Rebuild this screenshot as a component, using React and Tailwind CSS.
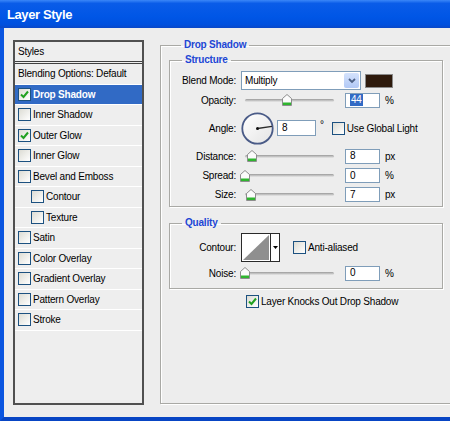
import React from "react";

const styleItems = [
  { label: "Drop Shadow", checked: true, selected: true },
  { label: "Inner Shadow" },
  { label: "Outer Glow", checked: true },
  { label: "Inner Glow" },
  { label: "Bevel and Emboss" },
  { label: "Contour", indent: true },
  { label: "Texture", indent: true },
  { label: "Satin" },
  { label: "Color Overlay" },
  { label: "Gradient Overlay" },
  { label: "Pattern Overlay" },
  { label: "Stroke" },
];

const Checkbox = ({ checked }) => (
  <span className="w-[13px] h-[13px] shrink-0 border border-[#1c5180] bg-[linear-gradient(135deg,#dcdcd4,#ffffff)] flex items-center justify-center">
    {checked && (
      <svg width="9" height="9" viewBox="0 0 9 9">
        <path d="M1 4.5 L3.5 7 L8 1.5" fill="none" stroke="#21a121" strokeWidth="2" />
      </svg>
    )}
  </span>
);

const Thumb = () => (
  <svg width="10" height="12" viewBox="0 0 10 12">
    <path d="M0.5 11.5 V4.5 L5 0.5 L9.5 4.5 V11.5 Z" fill="#fbfbfb" stroke="#8d8d8d" />
    <rect x="1" y="8.5" width="8" height="2.5" fill="#2fb52f" />
  </svg>
);

// thumb center measured from the slider's left edge
const Slider = ({ at }) => (
  <div className="relative w-[97px] h-[14px] flex items-center shrink-0">
    <div className="mx-[4px] flex-1 h-[3px] rounded-full bg-[linear-gradient(#9a9a9a,#e9e9e9)]" />
    <div className="absolute top-[1px]" style={{ left: at - 5 }}>
      <Thumb />
    </div>
  </div>
);

const NumInput = ({ value, selected, w = "w-[35px] h-[15px]" }) => (
  <div className={`${w} shrink-0 border border-[#7f9db9] bg-white flex items-center pl-[4px]`}>
    {selected ? (
      <span className="bg-[#316ac5] text-white px-[1px] leading-[12px]">{value}</span>
    ) : (
      <span className="leading-[12px]">{value}</span>
    )}
  </div>
);

const Label = ({ children }) => (
  <span className="w-[66px] shrink-0 text-right">{children}</span>
);

const SliderRow = ({ label, at, value, unit, h, selected }) => (
  <div className={`flex items-center ${h}`}>
    <Label>{label}</Label>
    <div className="ml-[5px] flex items-center">
      <Slider at={at} />
      <div className="ml-[7px]">
        <NumInput value={value} selected={selected} />
      </div>
      <span className="ml-[5px]">{unit}</span>
    </div>
  </div>
);

const Dial = () => (
  <svg width="33" height="33" viewBox="0 0 33 33">
    <defs>
      <linearGradient id="dialFill" x1="0" y1="0" x2="1" y2="1">
        <stop offset="0" stopColor="#ffffff" />
        <stop offset="1" stopColor="#e4e4e4" />
      </linearGradient>
    </defs>
    <circle cx="16.5" cy="16.5" r="15.2" fill="url(#dialFill)" stroke="#4a5b87" strokeWidth="1.8" />
    <line x1="16.5" y1="16.5" x2="31" y2="14.4" stroke="#2b2b2b" strokeWidth="1.4" />
    <circle cx="16.5" cy="16.5" r="1.5" fill="#111" />
  </svg>
);

const ContourPicker = () => (
  <div className="w-[39px] h-[29px] border border-[#2a2a2a] bg-white flex">
    <svg width="28" height="27" viewBox="0 0 28 27" className="shrink-0">
      <rect x="0" y="0" width="28" height="27" fill="#ffffff" />
      <polygon points="1,26 27,1 27,26" fill="#8f8f8f" />
    </svg>
    <div className="flex-1 border-l border-[#2a2a2a] flex items-center justify-center">
      <svg width="5" height="3" viewBox="0 0 5 3">
        <polygon points="0,0 5,0 2.5,3" fill="#000" />
      </svg>
    </div>
  </div>
);

const etched = "border border-[#a9a9a5] shadow-[1px_1px_0_#ffffff,inset_1px_1px_0_#ffffff]";

export default function App() {
  return (
    <div className="w-[450px] h-[421px] overflow-hidden flex flex-col font-['Liberation_Sans',Arial,sans-serif] text-[10px] tracking-[-0.2px] text-black">
      {/* title bar */}
      <div className="h-[28px] shrink-0 flex items-center pl-[7px] bg-[linear-gradient(#3b87f8_0%,#0a5ce8_12%,#0056e6_60%,#0050de_88%,#0a48c8_100%)]">
        <span className="text-white font-bold text-[13px] tracking-[-0.4px] pt-[1px]">Layer Style</span>
      </div>

      <div className="flex-1 flex overflow-hidden border-l-4 border-b-4 border-l-[#0a55e0] border-b-[#0845c4] bg-[#ededed]">
        {/* styles list */}
        <div className="ml-[9px] mt-[12px] w-[131px] h-[365px] shrink-0 border-2 border-[#505050] bg-[#eeeeee] flex flex-col">
          <div className="h-[22px] shrink-0 flex items-center pl-[3px] border-b-[3px] border-double border-[#404040]">
            Styles
          </div>
          <div className="h-[20.5px] shrink-0 flex items-center pl-[3px] border-b border-white">
            Blending Options: Default
          </div>
          {styleItems.map((item) => (
            <div
              key={item.label}
              className={`h-[20.5px] shrink-0 flex items-center gap-[2px] border-b border-white ${item.indent ? "pl-[16px]" : "pl-[3px]"} ${item.selected ? "bg-[#316ac5] text-white font-bold" : ""}`}
            >
              <Checkbox checked={item.checked} />
              <span>{item.label}</span>
            </div>
          ))}
        </div>

        {/* settings */}
        <fieldset className={`ml-[16px] mt-[10px] w-[300px] h-[366px] shrink-0 pl-[8px] ${etched}`}>
          <legend className="ml-[12px] px-[3px] leading-[14px] font-bold text-[#2146d4]">Drop Shadow</legend>

          <fieldset className={`mt-[1px] w-[274px] pb-[2px] ${etched}`}>
            <legend className="ml-[12px] px-[3px] leading-[14px] font-bold text-[#2146d4]">Structure</legend>

            <div className="mt-[4px] h-[19px] flex items-center">
              <Label>Blend Mode:</Label>
              <div className="ml-[5px] w-[120px] h-[19px] border border-[#7f9db9] bg-white flex items-center">
                <span className="pl-[3px] flex-1">Multiply</span>
                <div className="w-[15px] h-[15px] mr-[1px] rounded-[2px] bg-[linear-gradient(#d4e2fc,#b2c9f6)] flex items-center justify-center">
                  <svg width="8" height="6" viewBox="0 0 8 6">
                    <path d="M1 1 L4 4 L7 1" fill="none" stroke="#4d6185" strokeWidth="1.8" />
                  </svg>
                </div>
              </div>
              <div className="ml-[4px] w-[28px] h-[14px] border border-[#8a8a8a] bg-[#2e1a0c]" />
            </div>

            <SliderRow label="Opacity:" at={46} value="44" unit="%" h="h-[20px]" selected />

            <div className="h-[36px] flex items-center">
              <Label>Angle:</Label>
              <div className="ml-[5px] flex items-center">
                <Dial />
                <div className="ml-[3px]">
                  <NumInput value="8" w="w-[39px] h-[16px]" />
                </div>
                <span className="ml-[4px] -mt-[6px] leading-[10px]">°</span>
                <div className="ml-[8px]">
                  <Checkbox />
                </div>
                <span className="ml-[2px]">Use Global Light</span>
              </div>
            </div>

            <SliderRow label="Distance:" at={11} value="8" unit="px" h="h-[20px]" />
            <SliderRow label="Spread:" at={4} value="0" unit="%" h="h-[19px]" />
            <SliderRow label="Size:" at={10} value="7" unit="px" h="h-[19px]" />
          </fieldset>

          <fieldset className={`mt-[9px] w-[274px] pb-[4px] ${etched}`}>
            <legend className="ml-[12px] px-[3px] leading-[14px] font-bold text-[#2146d4]">Quality</legend>

            <div className="mt-[3px] h-[29px] flex items-center">
              <Label>Contour:</Label>
              <div className="ml-[5px] flex items-center">
                <ContourPicker />
                <div className="ml-[13px]">
                  <Checkbox />
                </div>
                <span className="ml-[2px]">Anti-aliased</span>
              </div>
            </div>

            <SliderRow label="Noise:" at={4} value="0" unit="%" h="h-[22px]" />
          </fieldset>

          <div className="mt-[6px] h-[13px] flex items-center gap-[2px] pl-[77px]">
            <Checkbox checked />
            <span>Layer Knocks Out Drop Shadow</span>
          </div>
        </fieldset>
      </div>
    </div>
  );
}
